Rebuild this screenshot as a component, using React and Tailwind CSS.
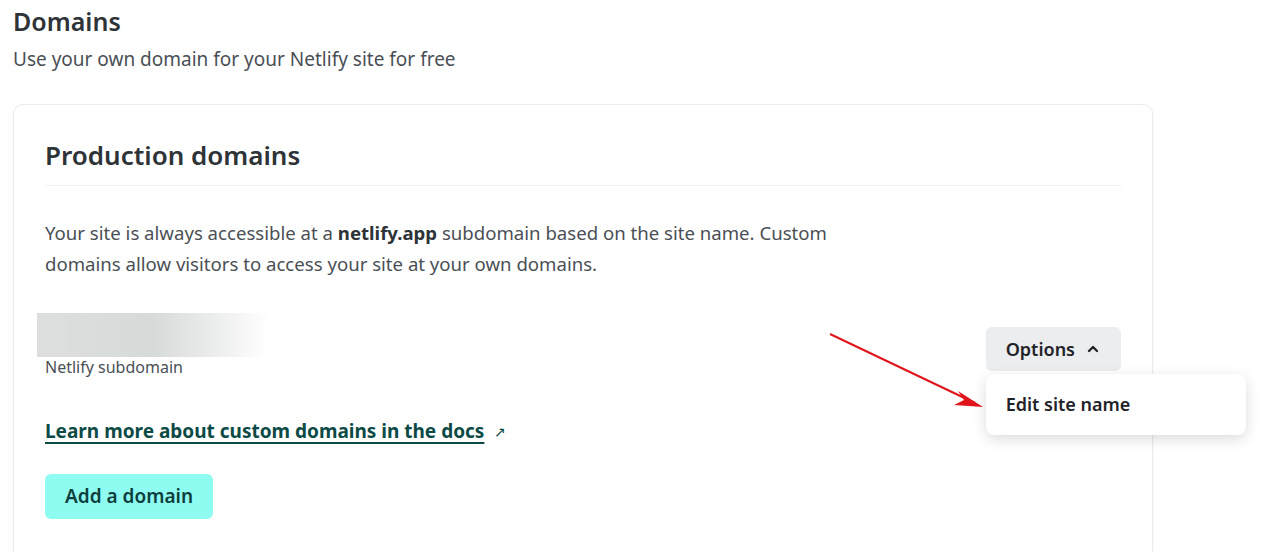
import { ChevronUp } from "lucide-react";

const font = { fontFamily: '"Noto Sans", "Open Sans", sans-serif' };

const App = () => {
  return (
    <div
      style={font}
      className="relative w-[1262px] h-[552px] overflow-hidden bg-white text-[#2e3338]"
    >
      <div className="px-[13px] pt-[4px]">
        <h1 className="text-[25px] font-semibold leading-[34px]">Domains</h1>
        <p className="mt-[8px] text-[19px] leading-[26px] text-[#4a4f55]">
          Use your own domain for your Netlify site for free
        </p>

        {/* Production domains card */}
        <div className="mt-[32px] w-[1140px] rounded-[10px] border border-[#ececec] shadow-[0_1px_3px_rgba(0,0,0,0.05)] bg-white px-[31px] pt-[30px] pb-[40px]">
          <h2 className="text-[26px] font-semibold leading-[40px] text-[#2e3338]">
            Production domains
          </h2>
          <div className="mt-[10px] h-px bg-[#f0f0f0]" />

          <p className="mt-[31px] max-w-[830px] text-[18.6px] leading-[31px] text-[#4a4f55]">
            Your site is always accessible at a{" "}
            <strong className="font-bold text-[#2e3338]">netlify.app</strong>{" "}
            subdomain based on the site name. Custom domains allow visitors to
            access your site at your own domains.
          </p>

          <div className="mt-[34px] flex items-start justify-between">
            <div>
              <div className="ml-[-8px] h-[44px] w-[232px] bg-gradient-to-r from-[#dcdfdd] via-[#d6dad8] to-white" />
              <p className="mt-[0px] text-[16px] leading-[20px] text-[#4a4f55]">
                Netlify subdomain
              </p>
            </div>

            <div className="relative mt-[14px]">
              <button className="flex h-[44px] items-center gap-[10px] rounded-[6px] bg-[#ebedee] px-[20px] text-[18px] font-semibold text-[#1f2328]">
                Options
                <ChevronUp size={16} strokeWidth={3.5} />
              </button>
              <div className="absolute left-0 top-[47px] z-10 w-[260px] rounded-[8px] bg-white py-[17px] px-[20px] shadow-[0_4px_14px_rgba(0,0,0,0.14)]">
                <span className="text-[18px] font-semibold text-[#1f2328]">
                  Edit site name
                </span>
              </div>
            </div>
          </div>

          <div className="mt-[41px] flex items-center gap-[10px]">
            <a
              href="#"
              className="text-[19px] font-bold leading-[26px] text-[#0b4a45] underline decoration-[2px] underline-offset-[4px]"
            >
              Learn more about custom domains in the docs
            </a>
            <span className="text-[14px] text-[#0b4a45]">↗</span>
          </div>

          <button className="mt-[30px] h-[45px] rounded-[6px] bg-[#8ffcf2] px-[20px] text-[19px] font-semibold text-[#0d3f3c]">
            Add a domain
          </button>
        </div>
      </div>

      {/* annotation arrow */}
      <svg
        className="absolute left-0 top-0 pointer-events-none"
        width="1262"
        height="552"
      >
        <line x1="830" y1="334" x2="975" y2="403" stroke="#e0141a" strokeWidth="2" />
        <polygon points="983,407 958,391 964,400 954,405" fill="#e0141a" />
      </svg>
    </div>
  );
};

export default App;
